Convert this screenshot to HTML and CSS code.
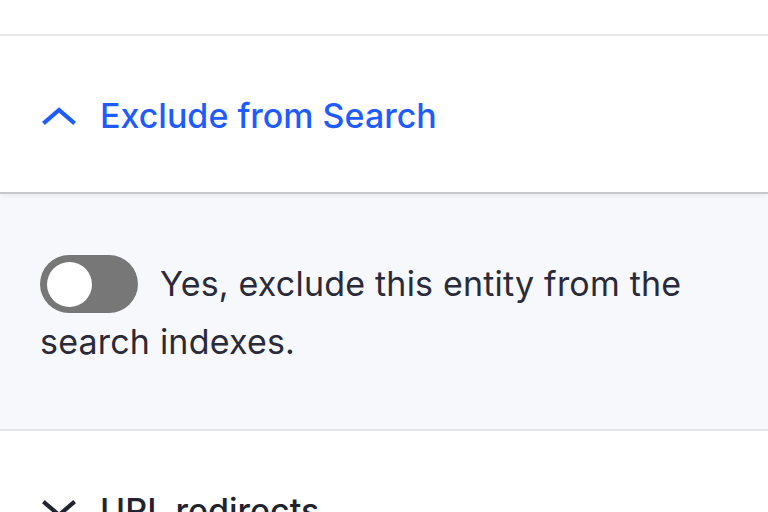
FILE: index.html
```html
<!DOCTYPE html>
<html lang="en">
<head>
<meta charset="utf-8">
<link rel="stylesheet" href="styles.css">
</head>
<body>
<div class="top"></div>
<section class="details open">
  <div class="summary summary-open">
    <svg class="chev" viewBox="0 0 34 18" width="34" height="18"><path d="M3 15 L17 3 L31 15" fill="none" stroke="currentColor" stroke-width="4.2" stroke-linecap="square"/></svg>
    <span class="title">Exclude from Search</span>
  </div>
  <div class="body">
    <p class="opt"><span class="toggle"><span class="knob"></span></span>Yes, exclude this entity from the search indexes.</p>
  </div>
</section>
<section class="details">
  <div class="summary summary-closed">
    <svg class="chev" viewBox="0 0 34 18" width="34" height="18"><path d="M3 3 L17 15 L31 3" fill="none" stroke="currentColor" stroke-width="4.2" stroke-linecap="square"/></svg>
    <span class="title">URL redirects</span>
  </div>
</section>
</body>
</html>
```
FILE: styles.css
```css
html, body {
  margin: 0;
  padding: 0;
  background: #ffffff;
  font-family: Inter, "Liberation Sans", sans-serif;
  overflow: hidden;
}
.top {
  height: 34px;
  border-bottom: 2px solid #e8e8ea;
}
.summary {
  display: flex;
  align-items: center;
  gap: 24px;
  padding: 0 42px;
  height: 156px;
}
.summary-open {
  color: #1f5cff;
  border-bottom: 2px solid #c8c8cc;
  box-shadow: 0 2px 4px rgba(0,0,0,0.06);
  position: relative;
  padding-top: 3px;
  box-sizing: border-box;
  height: 158px;
}
.summary-closed {
  color: #222330;
  align-items: flex-start;
  padding-top: 60px;
}
.summary-closed .chev { margin-top: 9px; }
.title {
  font-size: 34px;
  line-height: 40px;
  font-weight: 500;
  letter-spacing: 0;
}
.chev { flex: none; }
.body {
  background: #f7f8fc;
  border-bottom: 2px solid #e4e5ea;
  height: 237px;
  padding: 0 40px;
  box-sizing: border-box;
  padding-top: 61px;
}
.opt {
  margin: 0;
  font-size: 34px;
  line-height: 58px;
  letter-spacing: 0.2px;
  color: #2a2b3a;
}
.toggle {
  display: inline-block;
  width: 98px;
  height: 58px;
  border-radius: 29px;
  background: #777777;
  vertical-align: -17px;
  margin-right: 22px;
  position: relative;
  box-sizing: border-box;
  padding: 7px;
}
.knob {
  display: block;
  width: 45px;
  height: 45px;
  border-radius: 50%;
  background: #ffffff;
}
```
